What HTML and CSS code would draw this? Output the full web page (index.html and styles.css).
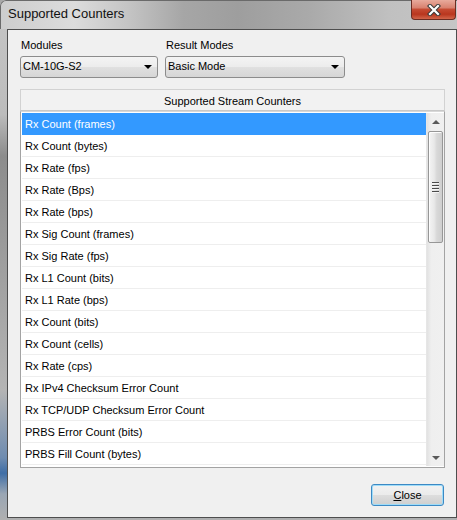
FILE: index.html
```html
<!DOCTYPE html>
<html lang="en">
<head>
    <meta charset="UTF-8">
    <title>Supported Counters</title>
    <link rel="stylesheet" href="styles.css">
</head>
<body>
    <div class="window">
        <div class="titlebar">
            <span class="title">Supported Counters</span>
            <div class="caption-close">
                <svg width="14" height="12" viewBox="0 0 14 12">
                    <path d="M3 2 L11 10 M11 2 L3 10" stroke="#3a3a3a" stroke-width="4.2" stroke-linecap="square"/>
                    <path d="M3 2 L11 10 M11 2 L3 10" stroke="#ffffff" stroke-width="2.2" stroke-linecap="square"/>
                </svg>
            </div>
        </div>
        <div class="frame">
            <div class="client">
                <div class="selectors">
                    <div class="field">
                        <label>Modules</label>
                        <div class="combo combo-modules">CM-10G-S2<span class="arrow"></span></div>
                    </div>
                    <div class="field">
                        <label>Result Modes</label>
                        <div class="combo combo-modes">Basic Mode<span class="arrow"></span></div>
                    </div>
                </div>

                <div class="counters">
                    <div class="list-header">Supported Stream Counters</div>
                    <div class="list">
                        <ul class="rows">
                            <li class="selected">Rx Count (frames)</li>
                            <li>Rx Count (bytes)</li>
                            <li>Rx Rate (fps)</li>
                            <li>Rx Rate (Bps)</li>
                            <li>Rx Rate (bps)</li>
                            <li>Rx Sig Count (frames)</li>
                            <li>Rx Sig Rate (fps)</li>
                            <li>Rx L1 Count (bits)</li>
                            <li>Rx L1 Rate (bps)</li>
                            <li>Rx Count (bits)</li>
                            <li>Rx Count (cells)</li>
                            <li>Rx Rate (cps)</li>
                            <li>Rx IPv4 Checksum Error Count</li>
                            <li>Rx TCP/UDP Checksum Error Count</li>
                            <li>PRBS Error Count (bits)</li>
                            <li>PRBS Fill Count (bytes)</li>
                        </ul>
                        <div class="scrollbar">
                            <div class="sb-btn"><span class="tri-up"></span></div>
                            <div class="sb-track">
                                <div class="sb-thumb">
                                    <span class="grip"></span>
                                    <span class="grip"></span>
                                    <span class="grip"></span>
                                    <span class="grip"></span>
                                </div>
                            </div>
                            <div class="sb-btn"><span class="tri-down"></span></div>
                        </div>
                    </div>
                </div>

                <div class="footer">
                    <button class="btn" type="button"><u>C</u>lose</button>
                </div>
            </div>
        </div>
    </div>
</body>
</html>
```

FILE: styles.css
```css
body {
    margin: 0;
    padding: 0;
    font-family: 'Liberation Sans', Arial, sans-serif;
    font-size: 11px;
    color: #000;
    background-color: #a8a8a8;
}

.window {
    width: 457px;
    height: 520px;
    display: flex;
    flex-direction: column;
    border-top-left-radius: 6px;
    overflow: hidden;
    background: linear-gradient(to bottom, #c6c6c6 0, #bcbcbc 22%, #8c8c8c 30%, #999 45%, #b4b4b4 75%, #6f8cb0 88%, #3f6ea6 91%, #9aa6b4 95%, #b0b0b0 100%);
}

/* title bar */
.titlebar {
    height: 29px;
    flex: none;
    display: flex;
    align-items: flex-start;
    box-sizing: border-box;
    border-top: 1px solid #6a6a6a;
    border-left: 1px solid #6a6a6a;
    border-top-left-radius: 6px;
    background: linear-gradient(to right, #cdcdcd 0, #dcdcdc 16%, #c4c4c4 28%, #a6a6a6 40%, #9e9e9e 52%, #aaaaaa 68%, #c0c0c0 85%, #c6c6c6 100%);
}
.title {
    font-size: 13px;
    color: #111;
    padding: 5px 0 0 7px;
}
.caption-close {
    margin-left: auto;
    margin-right: 1px;
    margin-top: -1px;
    width: 45px;
    height: 20px;
    box-sizing: border-box;
    border: 1px solid #6b2c22;
    border-top: none;
    border-radius: 0 0 4px 4px;
    background: linear-gradient(to bottom, #e8aa9c 0, #d98270 40%, #c54a32 50%, #b9361e 75%, #d2654a 100%);
    display: flex;
    align-items: center;
    justify-content: center;
}

/* frame around client area */
.frame {
    flex: 1;
    padding: 0 1px 2px 7px;
    display: flex;
}
.client {
    flex: 1;
    border: 1px solid #4e4e4e;
    background-color: #f0f0f0;
    padding: 8px 11px 0 12px;
    display: flex;
    flex-direction: column;
}

/* combos */
.selectors {
    display: flex;
    gap: 7px;
}
.field label {
    display: block;
    height: 15px;
    line-height: 15px;
    padding-left: 1px;
    margin-bottom: 3px;
}
.combo {
    position: relative;
    height: 22px;
    line-height: 19px;
    box-sizing: border-box;
    padding-left: 2px;
    border: 1px solid #8c8c8c;
    border-radius: 3px;
    background: linear-gradient(to bottom, #f4f4f4 0, #ececec 50%, #e0e0e0 51%, #d6d6d6 100%);
}
.combo-modules { width: 138px; }
.combo-modes { width: 180px; }
.combo .arrow {
    position: absolute;
    right: 5px;
    top: 8px;
    width: 0;
    height: 0;
    border-left: 4px solid transparent;
    border-right: 4px solid transparent;
    border-top: 4px solid #000;
}

/* list */
.counters {
    margin-top: 11px;
}
.list-header {
    height: 22px;
    line-height: 20px;
    padding-top: 1px;
    box-sizing: border-box;
    text-align: center;
    border: 1px solid #d2d2d2;
    border-bottom-color: #c8c8c8;
    background-color: #f2f2f2;
}
.list {
    height: 357px;
    box-sizing: border-box;
    border: 1px solid #a3a3a3;
    border-top-color: #d8d8d8;
    background-color: #fff;
    padding: 1px 0 1px 1px;
    display: flex;
}
.rows {
    list-style: none;
    margin: 0;
    padding: 0;
    width: 404px;
    overflow: hidden;
}
.rows li {
    height: 22px;
    line-height: 19px;
    padding-top: 2px;
    box-sizing: border-box;
    padding-left: 3px;
    border-bottom: 1px solid #eeeeee;
    white-space: nowrap;
}
.rows li.selected {
    background-color: #3399ff;
    border-bottom-color: #3399ff;
    color: #fff;
}

/* scrollbar */
.scrollbar {
    width: 17px;
    display: flex;
    flex-direction: column;
    background: linear-gradient(to right, #e2e2e2 0, #efefef 25%, #f0f0f0 100%);
    border-left: 1px solid #e6e6e6;
}
.sb-btn {
    height: 17px;
    display: flex;
    align-items: center;
    justify-content: center;
}
.tri-up, .tri-down {
    width: 0;
    height: 0;
    border-left: 4px solid transparent;
    border-right: 4px solid transparent;
}
.tri-up { border-bottom: 4px solid #5a5a5a; }
.tri-down { border-top: 4px solid #5a5a5a; }
.sb-track {
    flex: 1;
}
.sb-thumb {
    margin: 1px 1px 0 1px;
    height: 112px;
    box-sizing: border-box;
    border: 1px solid #979797;
    border-radius: 2px;
    background: linear-gradient(to right, #f4f4f4 0, #e8e8e8 40%, #d8d8d8 60%, #cfcfcf 100%);
    box-shadow: inset 1px 1px 0 #fcfcfc;
    display: flex;
    flex-direction: column;
    align-items: center;
    justify-content: center;
    gap: 1px;
}
.grip {
    width: 7px;
    height: 1px;
    background-color: #4a4a4a;
    border-bottom: 1px solid #f4f4f4;
}

/* footer */
.footer {
    display: flex;
    justify-content: flex-end;
    padding-top: 16px;
}
.btn {
    width: 73px;
    height: 22px;
    margin-right: 1px;
    font-family: 'Liberation Sans', Arial, sans-serif;
    font-size: 11px;
    color: #000;
    border: 1px solid #3c89c4;
    border-radius: 3px;
    background: linear-gradient(to bottom, #f2f2f2 0, #ebebeb 50%, #dddddd 51%, #cfcfcf 100%);
    box-shadow: inset 0 0 0 1px #9fdcf8;
    padding: 0;
}
```
